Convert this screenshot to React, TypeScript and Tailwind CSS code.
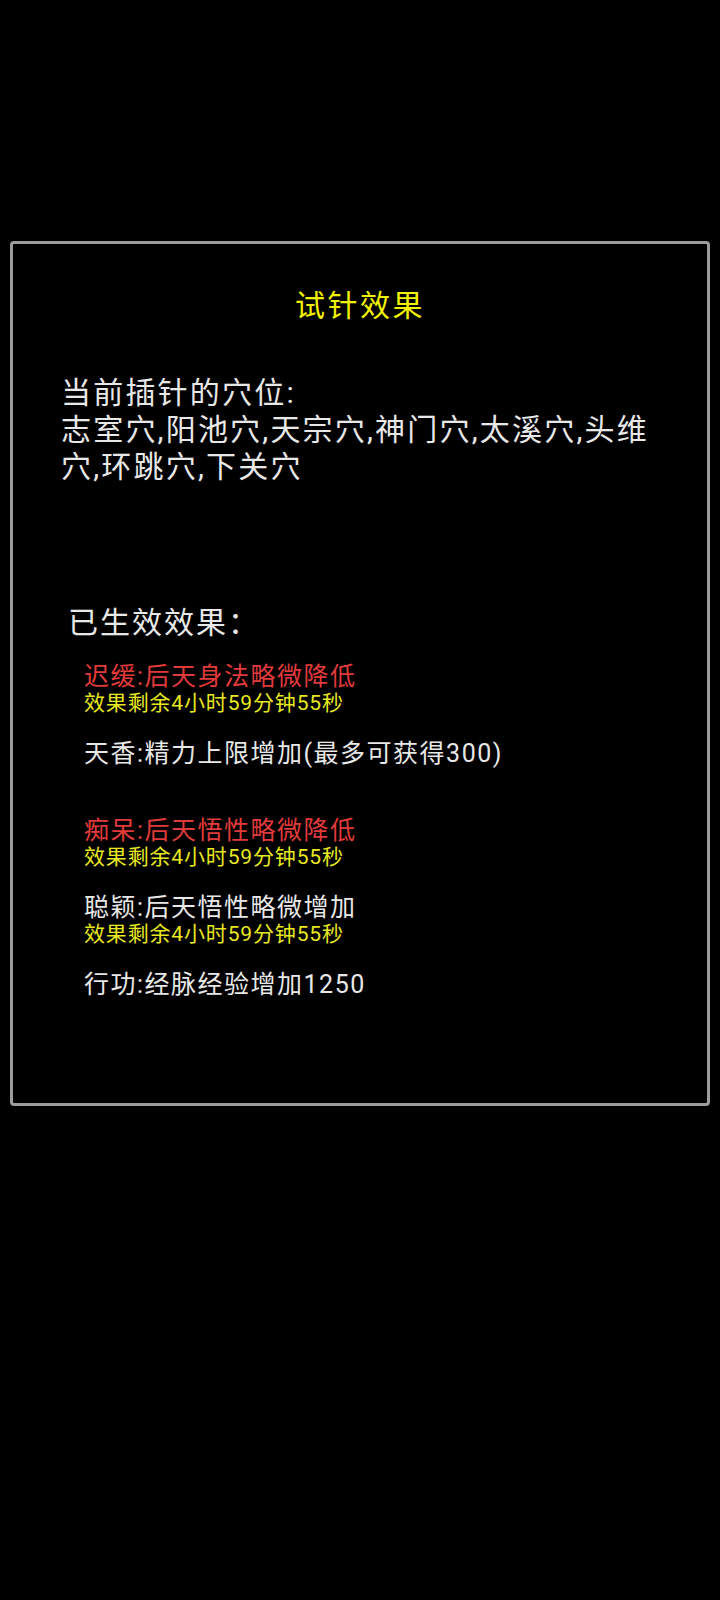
import React from 'react'

type Effect = {
  name: string
  bad?: boolean
  timer?: string
}

const effects: Effect[] = [
  { name: '迟缓:后天身法略微降低', bad: true, timer: '效果剩余4小时59分钟55秒' },
  { name: '天香:精力上限增加(最多可获得300)' },
  { name: '痴呆:后天悟性略微降低', bad: true, timer: '效果剩余4小时59分钟55秒' },
  { name: '聪颖:后天悟性略微增加', timer: '效果剩余4小时59分钟55秒' },
  { name: '行功:经脉经验增加1250' },
]

const EffectRow = ({ effect }: { effect: Effect }) => {
  return (
    <div className="mb-[25px]">
      <div
        className={
          effect.bad
            ? 'text-[25px] leading-[28px] tracking-[0.06em] text-[#e03b3b]'
            : 'text-[25px] leading-[28px] tracking-[0.06em] text-[#e8e8e8]'
        }
      >
        {effect.name}
      </div>
      <div className="h-[24px] text-[21px] leading-[24px] tracking-[0.04em] text-[#e8e81e]">
        {effect.timer}
      </div>
    </div>
  )
}

const App = () => {
  return (
    <div className="min-h-[1600px] bg-black pt-[241px] font-['Roboto','Noto_Sans_CJK_SC',sans-serif]">
      <div className="mx-[10px] h-[865px] rounded-[4px] border-[3px] border-[#9c9c9c] bg-black">
        <h1 className="pt-[44px] text-center text-[30px] leading-[36px] tracking-[2.5px] text-[#f2f200]">
          试针效果
        </h1>

        <p className="mt-[50px] w-[650px] pl-[48px] text-[30px] leading-[37px] tracking-[2.2px] text-[#e8e8e8]">
          当前插针的穴位:
          <br />
          志室穴,阳池穴,天宗穴,神门穴,太溪穴,头维穴,环跳穴,下关穴
        </p>

        <h2 className="mt-[120px] pl-[55px] text-[30px] leading-[36px] tracking-[2px] text-[#e8e8e8]">
          已生效效果：
        </h2>

        <div className="mt-[22px] pl-[71px]">
          {effects.map((e) => (
            <EffectRow key={e.name} effect={e} />
          ))}
        </div>
      </div>
    </div>
  )
}

export default App
